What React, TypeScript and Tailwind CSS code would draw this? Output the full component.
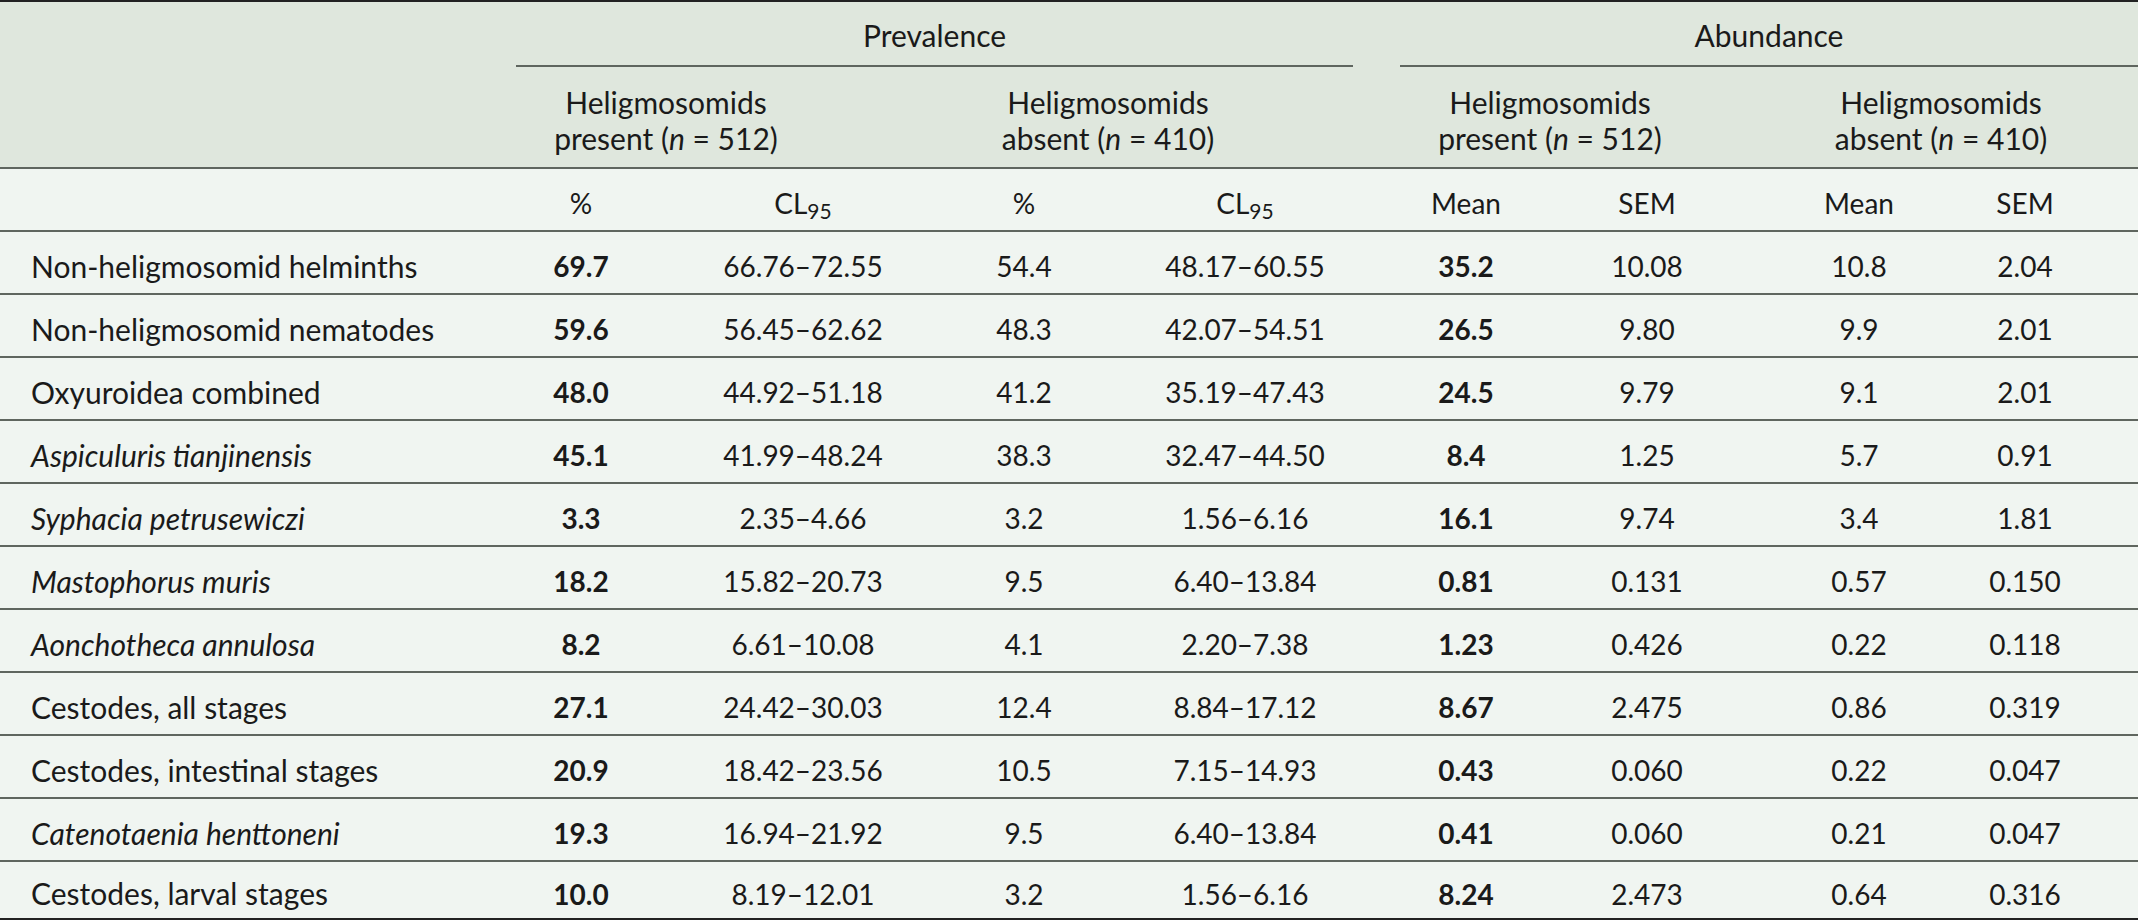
type Row = {
  label: string;
  italic?: boolean;
  values: string[];
};

const ROWS: Row[] = [
  { label: 'Non-heligmosomid helminths', values: ['69.7', '66.76–72.55', '54.4', '48.17–60.55', '35.2', '10.08', '10.8', '2.04'] },
  { label: 'Non-heligmosomid nematodes', values: ['59.6', '56.45–62.62', '48.3', '42.07–54.51', '26.5', '9.80', '9.9', '2.01'] },
  { label: 'Oxyuroidea combined', values: ['48.0', '44.92–51.18', '41.2', '35.19–47.43', '24.5', '9.79', '9.1', '2.01'] },
  { label: 'Aspiculuris tianjinensis', italic: true, values: ['45.1', '41.99–48.24', '38.3', '32.47–44.50', '8.4', '1.25', '5.7', '0.91'] },
  { label: 'Syphacia petrusewiczi', italic: true, values: ['3.3', '2.35–4.66', '3.2', '1.56–6.16', '16.1', '9.74', '3.4', '1.81'] },
  { label: 'Mastophorus muris', italic: true, values: ['18.2', '15.82–20.73', '9.5', '6.40–13.84', '0.81', '0.131', '0.57', '0.150'] },
  { label: 'Aonchotheca annulosa', italic: true, values: ['8.2', '6.61–10.08', '4.1', '2.20–7.38', '1.23', '0.426', '0.22', '0.118'] },
  { label: 'Cestodes, all stages', values: ['27.1', '24.42–30.03', '12.4', '8.84–17.12', '8.67', '2.475', '0.86', '0.319'] },
  { label: 'Cestodes, intestinal stages', values: ['20.9', '18.42–23.56', '10.5', '7.15–14.93', '0.43', '0.060', '0.22', '0.047'] },
  { label: 'Catenotaenia henttoneni', italic: true, values: ['19.3', '16.94–21.92', '9.5', '6.40–13.84', '0.41', '0.060', '0.21', '0.047'] },
  { label: 'Cestodes, larval stages', values: ['10.0', '8.19–12.01', '3.2', '1.56–6.16', '8.24', '2.473', '0.64', '0.316'] },
];

const GRID = 'grid grid-cols-[512px_138px_306px_136px_306px_136px_226px_198px_134px]';
const CELL = 'flex items-center justify-center whitespace-nowrap pt-[7px] text-[28px]';

function GroupHead({ first, second, n, width }: { first: string; second: string; n: string; width: string }) {
  return (
    <div className={`${width} flex flex-col items-center justify-center leading-[36px]`}>
      <span>{first}</span>
      <span>
        {second} (<i>n</i> = {n})
      </span>
    </div>
  );
}

function Cl95() {
  return (
    <span>
      CL<sub>95</sub>
    </span>
  );
}

export default function App() {
  return (
    <div className="w-[2138px] h-[920px] overflow-hidden bg-[#f0f5f1] text-[#1a1a1a] text-[30px] [font-family:Lato,sans-serif]">
      <div className="bg-[#dfe7dd] border-t-2 border-[#222]">
        <div className="flex h-[65px]">
          <div className="w-[516px]" />
          <div className="w-[837px] flex items-center justify-center pt-[3px] border-b-2 border-[#5f665f]">
            Prevalence
          </div>
          <div className="w-[47px]" />
          <div className="flex-1 flex items-center justify-center pt-[3px] border-b-2 border-[#5f665f]">
            Abundance
          </div>
        </div>
        <div className="flex h-[102px] pl-[446px] pt-[5px] border-b-2 border-[#5f665f]">
          <GroupHead width="w-[440px]" first="Heligmosomids" second="present" n="512" />
          <GroupHead width="w-[444px]" first="Heligmosomids" second="absent" n="410" />
          <GroupHead width="w-[440px]" first="Heligmosomids" second="present" n="512" />
          <GroupHead width="w-[342px]" first="Heligmosomids" second="absent" n="410" />
        </div>
      </div>

      <div className={`${GRID} h-[63px] border-b-2 border-[#5f665f]`}>
        <div />
        <div className={CELL}>%</div>
        <div className={CELL}>
          <Cl95 />
        </div>
        <div className={CELL}>%</div>
        <div className={CELL}>
          <Cl95 />
        </div>
        <div className={CELL}>Mean</div>
        <div className={CELL}>SEM</div>
        <div className={CELL}>Mean</div>
        <div className={CELL}>SEM</div>
      </div>

      {ROWS.map((row, i) => {
        const last = i === ROWS.length - 1;
        return (
          <div
            key={row.label}
            className={[
              GRID,
              'border-b-2',
              last ? 'h-[58px] border-[#222]' : 'h-[63px] border-[#5f665f]',
            ].join(' ')}
          >
            <div className={`flex items-center pl-[31px] pt-[7px] whitespace-nowrap ${row.italic ? 'italic' : ''}`}>
              {row.label}
            </div>
            {row.values.map((v, j) => (
              <div key={j} className={`${CELL} ${j === 0 || j === 4 ? 'font-bold' : ''}`}>
                {v}
              </div>
            ))}
          </div>
        );
      })}
    </div>
  );
}
